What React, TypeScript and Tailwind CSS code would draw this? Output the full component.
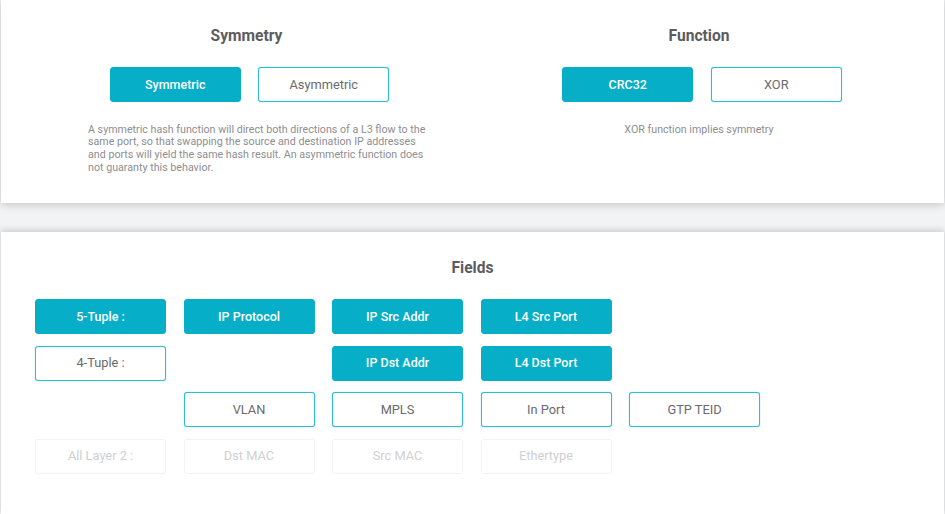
const roboto = "font-['Roboto',sans-serif]";

type Kind = "on" | "off" | "dim" | "none";

function Btn({ label, kind }: { label?: string; kind: Kind }) {
  if (kind === "none") return <div />;
  const styles =
    kind === "on"
      ? "bg-[#06aec8] border-[#06aec8] text-white font-medium text-[12.5px] pt-px"
      : kind === "off"
        ? "bg-white border-[#2dbdd4] text-[#6a6a6c] shadow-[0_0_1px_#2dbdd4] text-[12.8px]"
        : "bg-white border-[#f3f3f4] text-[#d0d0d2] text-[12.8px]";
  return (
    <div className={`h-[35px] flex items-center justify-center rounded-[3px] border ${styles}`}>
      {label}
    </div>
  );
}

const rows: [string, Kind][][] = [
  [["5-Tuple :", "on"], ["IP Protocol", "on"], ["IP Src Addr", "on"], ["L4 Src Port", "on"], ["", "none"]],
  [["4-Tuple :", "off"], ["", "none"], ["IP Dst Addr", "on"], ["L4 Dst Port", "on"], ["", "none"]],
  [["", "none"], ["VLAN", "off"], ["MPLS", "off"], ["In Port", "off"], ["GTP TEID", "off"]],
  [["All Layer 2 :", "dim"], ["Dst MAC", "dim"], ["Src MAC", "dim"], ["Ethertype", "dim"], ["", "none"]],
];

export default function App() {
  return (
    <div className={`w-[945px] h-[514px] overflow-hidden bg-[#f2f3f4] px-px flex flex-col ${roboto}`}>
      <section className="h-[203px] shrink-0 bg-white shadow-[0_1px_9px_rgba(0,0,0,0.22)] grid grid-cols-[472px_452px] pt-[27px] relative">
        <div className="flex flex-col items-center pl-[19px]">
          <h2 className="text-[15.6px] leading-[19px] font-bold text-[#5c5c5f]">Symmetry</h2>
          <div className="mt-[21px] ml-[6px] grid grid-cols-[131px_131px] gap-x-[17.5px]">
            <Btn label="Symmetric" kind="on" />
            <Btn label="Asymmetric" kind="off" />
          </div>
          <p className="mt-[21.5px] self-start ml-[68px] w-[345px] text-[10.7px] leading-[12.67px] text-[#8e8e92]">
            A symmetric hash function will direct both directions of a L3 flow to the same port, so that swapping the
            source and destination IP addresses and ports will yield the same hash result. An asymmetric function does
            not guaranty this behavior.
          </p>
        </div>
        <div className="flex flex-col items-center">
          <h2 className="text-[15.6px] leading-[19px] font-bold text-[#5c5c5f]">Function</h2>
          <div className="mt-[21px] ml-[6px] grid grid-cols-[131px_131px] gap-x-[17.5px]">
            <Btn label="CRC32" kind="on" />
            <Btn label="XOR" kind="off" />
          </div>
          <p className="mt-[21.5px] text-[10.7px] leading-[12.67px] text-[#8e8e92]">XOR function implies symmetry</p>
        </div>
      </section>
      <section className="mt-[29px] flex-1 bg-white shadow-[0_-1px_7px_rgba(0,0,0,0.2)] pt-[27px] pl-[34px]">
        <h2 className="w-[943px] -ml-[34px] text-center text-[15.6px] leading-[19px] font-bold text-[#5c5c5f]">Fields</h2>
        <div className="mt-[21px] grid grid-cols-[131px_131px_131px_131px_131px] gap-x-[17.5px] gap-y-[11.5px]">
          {rows.flat().map(([label, kind], i) => (
            <Btn key={i} label={label} kind={kind} />
          ))}
        </div>
      </section>
    </div>
  );
}
